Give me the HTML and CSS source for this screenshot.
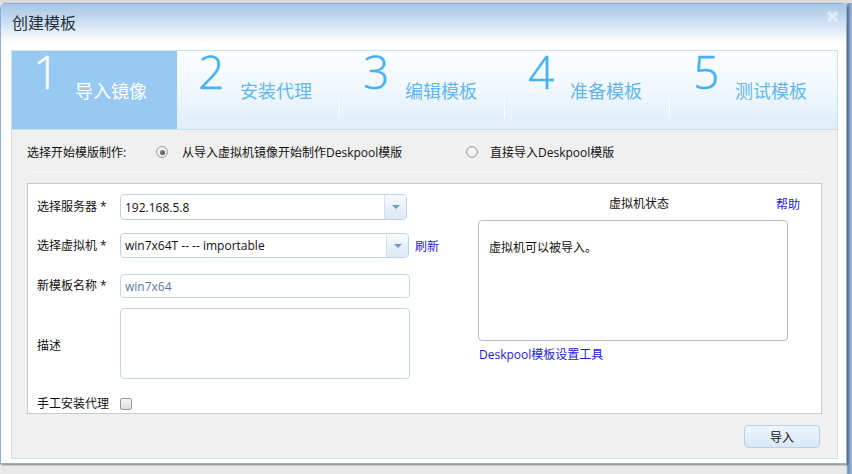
FILE: index.html
```html
<!DOCTYPE html>
<html lang="zh-CN">
<head>
<meta charset="utf-8">
<title>创建模板</title>
<link rel="stylesheet" href="styles.css">
</head>
<body>
<div class="backdrop-top"></div>
<div class="window">
  <div class="titlebar">
    <span class="title">创建模板</span>
    <span class="close"><svg width="11" height="11" viewBox="0 0 11 11"><path d="M1.5 1.5 L9.5 9.5 M9.5 1.5 L1.5 9.5" stroke="#ffffff" stroke-width="2" stroke-linecap="round"/></svg></span>
  </div>
  <div class="steps">
    <div class="step active"><span class="num">1</span><span class="label">导入镜像</span></div>
    <div class="step"><span class="num">2</span><span class="label">安装代理</span><i class="divider"></i></div>
    <div class="step"><span class="num">3</span><span class="label">编辑模板</span><i class="divider"></i></div>
    <div class="step"><span class="num">4</span><span class="label">准备模板</span><i class="divider"></i></div>
    <div class="step"><span class="num">5</span><span class="label">测试模板</span></div>
  </div>
  <div class="content">
    <div class="mode-row">
      <span class="mode-label">选择开始模版制作:</span>
      <label class="option opt1"><span class="radio checked"></span><span>从导入虚拟机镜像开始制作Deskpool模版</span></label>
      <label class="option opt2"><span class="radio"></span><span>直接导入Deskpool模版</span></label>
    </div>
    <div class="sep"></div>
    <div class="panel">
      <div class="form">
        <div class="row r1">
          <span class="flabel">选择服务器 *</span>
          <div class="select s1"><span class="value">192.168.5.8</span><span class="arrow"><i></i></span></div>
        </div>
        <div class="row r2">
          <span class="flabel">选择虚拟机 *</span>
          <div class="select s2"><span class="value">win7x64T -- -- importable</span><span class="arrow"><i></i></span></div>
          <a class="link refresh">刷新</a>
        </div>
        <div class="row r3">
          <span class="flabel">新模板名称 *</span>
          <div class="input"><span class="ival">win7x64</span></div>
        </div>
        <div class="row r4">
          <span class="flabel desc">描述</span>
          <div class="textarea"></div>
        </div>
        <div class="row r5">
          <span class="flabel">手工安装代理</span>
          <span class="checkbox"></span>
        </div>
      </div>
      <div class="status">
        <div class="status-head">
          <span class="spacer"></span>
          <span class="status-title">虚拟机状态</span>
          <a class="link help">帮助</a>
        </div>
        <div class="status-box">虚拟机可以被导入。</div>
        <a class="link tool">Deskpool模板设置工具</a>
      </div>
    </div>
    <div class="footer">
      <button class="btn">导入</button>
    </div>
  </div>
</div>
</body>
</html>
```
FILE: styles.css
```css
html, body {
  margin: 0;
  padding: 0;
}
body {
  width: 852px;
  height: 474px;
  overflow: hidden;
  background: linear-gradient(to right, #e9e9e9 0, #e9e9e9 846px, #6f8fb8 848px, #9fb8d4 852px);
  font-family: "Open Sans", "Noto Sans CJK SC", sans-serif;
  font-size: 12px;
  color: #111;
}
.backdrop-top {
  height: 3px;
  background: #dcdcdc;
}
.window {
  box-sizing: border-box;
  width: 847px;
  height: 461px;
  border: 1px solid #8db0d3;
  border-radius: 5px 5px 0 0;
  background: #ffffff;
  box-shadow: 1px 1px 2px rgba(0, 0, 0, 0.45);
  display: flex;
  flex-direction: column;
}
.titlebar {
  height: 46px;
  flex: none;
  display: flex;
  justify-content: space-between;
  align-items: flex-start;
  padding: 0 8px 0 11px;
  background: linear-gradient(to bottom, #a5c6e5 0%, #c8dcf0 35%, #eaf2fa 65%, #ffffff 85%);
  border-radius: 4px 4px 0 0;
}
.title {
  font-family: "Noto Sans CJK SC", sans-serif;
  font-size: 16px;
  line-height: 20px;
  margin-top: 8px;
  color: #25303c;
}
.close {
  margin-top: 7px;
  width: 11px;
  height: 11px;
  opacity: 0.6;
  filter: drop-shadow(0 0 2px #ffffff);
}
.close svg {
  display: block;
}
.steps {
  flex: none;
  margin: 0 8px 0 10px;
  height: 80px;
  box-sizing: border-box;
  border: 1px solid #c9e3ea;
  display: flex;
  background: linear-gradient(to bottom, #fbfdff 0%, #f1f8fd 45%, #dfeefa 100%);
}
.step {
  width: 165px;
  flex: none;
  position: relative;
  display: flex;
  align-items: flex-start;
  padding-left: 21px;
  box-sizing: border-box;
}
.step .num {
  width: 42px;
  flex: none;
  font-family: "Open Sans", sans-serif;
  font-weight: 300;
  font-size: 46px;
  line-height: 40px;
  color: #43b2ee;
  -webkit-text-stroke: 0.4px currentColor;
}
.step .label {
  font-family: "Noto Sans CJK SC", sans-serif;
  font-size: 18px;
  line-height: 18px;
  margin-top: 30px;
  color: #63b7ec;
}
.step.active {
  background: #98c9f2;
}
.step.active .num,
.step.active .label {
  color: #ffffff;
}
.divider {
  position: absolute;
  right: 2px;
  top: 49px;
  width: 1px;
  height: 18px;
  background: #ffffff;
  box-shadow: 1px 0 0 #e4eef7;
}
.content {
  flex: none;
  margin: 0 8px 0 10px;
  height: 329px;
  box-sizing: border-box;
  border: 1px solid #d6dee6;
  border-top: none;
  background: #f0f0f0;
  padding: 0 15px;
}
.mode-row {
  height: 40px;
  padding-top: 2px;
  display: flex;
  align-items: center;
}
.mode-label {
  width: 129px;
  flex: none;
}
.option {
  display: flex;
  align-items: center;
}
.opt1 {
  width: 310px;
  flex: none;
}
.opt1 .radio {
  margin-right: 14px;
}
.opt2 .radio {
  margin-right: 12px;
}
.radio {
  width: 12px;
  height: 12px;
  flex: none;
  box-sizing: border-box;
  border: 1px solid #a2a2a2;
  border-radius: 50%;
  background: radial-gradient(circle at 50% 40%, #fbfbfb 0%, #dcdcdc 100%);
  position: relative;
}
.radio.checked::after {
  content: "";
  position: absolute;
  left: 2.5px;
  top: 2.5px;
  width: 5px;
  height: 5px;
  border-radius: 50%;
  background: radial-gradient(circle at 40% 35%, #8a8a8a 0%, #3a3a3a 100%);
}
.sep {
  height: 1px;
  background: #f8f8f8;
  margin: 0 10px 0 1px;
}
.panel {
  margin-top: 10px;
  height: 231px;
  box-sizing: border-box;
  border: 1px solid #c9c9c9;
  background: #ffffff;
  display: flex;
  padding: 10px 0 0 9px;
}
.form {
  width: 441px;
  flex: none;
}
.row {
  display: flex;
  align-items: center;
}
.flabel {
  width: 83px;
  flex: none;
  line-height: 16px;
}
.r2 { margin-top: 13px; }
.r3 { margin-top: 16px; }
.r4 { margin-top: 10px; }
.r5 { margin-top: 17px; }
.flabel.desc {
  padding-top: 5px;
}
.select {
  box-sizing: border-box;
  height: 25px;
  border: 1px solid #bcd3e8;
  border-radius: 4px;
  display: flex;
  align-items: stretch;
  background: #ffffff;
}
.s1 { width: 287px; height: 26px; }
.s2 { width: 289px; }
.select .value {
  flex: 1;
  padding-left: 4px;
  display: flex;
  align-items: center;
  font-size: 12px;
  color: #111;
}
.select .arrow {
  width: 21px;
  flex: none;
  border-left: 1px solid #d3e1ee;
  border-radius: 0 3px 3px 0;
  background: linear-gradient(to bottom, #fbfdff 0%, #e6eff8 55%, #dde9f5 100%);
  display: flex;
  align-items: center;
  justify-content: center;
}
.select .arrow i {
  width: 0;
  height: 0;
  border-left: 4px solid transparent;
  border-right: 4px solid transparent;
  border-top: 4px solid #6d9bc7;
}
.link {
  color: #1c1cd8;
  cursor: pointer;
}
.refresh {
  margin-left: 6px;
}
.input {
  box-sizing: border-box;
  width: 290px;
  height: 24px;
  border: 1px solid #c2d7ea;
  border-radius: 4px;
  display: flex;
  align-items: center;
  padding-left: 4px;
}
.ival {
  color: #5a79a2;
}
.textarea {
  box-sizing: border-box;
  width: 290px;
  height: 71px;
  border: 1px solid #c2d7ea;
  border-radius: 4px;
}
.checkbox {
  width: 12px;
  height: 12px;
  box-sizing: border-box;
  border: 1px solid #9a9a9a;
  border-radius: 2px;
  background: linear-gradient(to bottom, #f6f6f6, #dedede);
}
.status {
  width: 322px;
  flex: none;
}
.status-head {
  display: flex;
  align-items: center;
  height: 18px;
}
.spacer,
.help {
  width: 24px;
  flex: none;
}
.status-title {
  flex: 1;
  text-align: center;
}
.help {
  margin-top: 2px;
}
.status-box {
  margin-top: 8px;
  box-sizing: border-box;
  width: 310px;
  height: 121px;
  border: 1px solid #bdbdbd;
  border-radius: 4px;
  padding: 19px 10px;
  line-height: 16px;
}
.tool {
  display: block;
  margin-top: 7px;
  padding-left: 1px;
  line-height: 14px;
}
.footer {
  margin-top: 11px;
  display: flex;
  justify-content: flex-end;
  padding-right: 2px;
}
.btn {
  width: 76px;
  height: 23px;
  box-sizing: border-box;
  border: 1px solid #b8d0e7;
  border-radius: 4px;
  background: linear-gradient(to bottom, #eef5fc 0%, #e4eef9 50%, #d9e8f6 100%);
  font-family: "Noto Sans CJK SC", sans-serif;
  font-size: 12px;
  color: #111;
  padding: 0;
}
```
